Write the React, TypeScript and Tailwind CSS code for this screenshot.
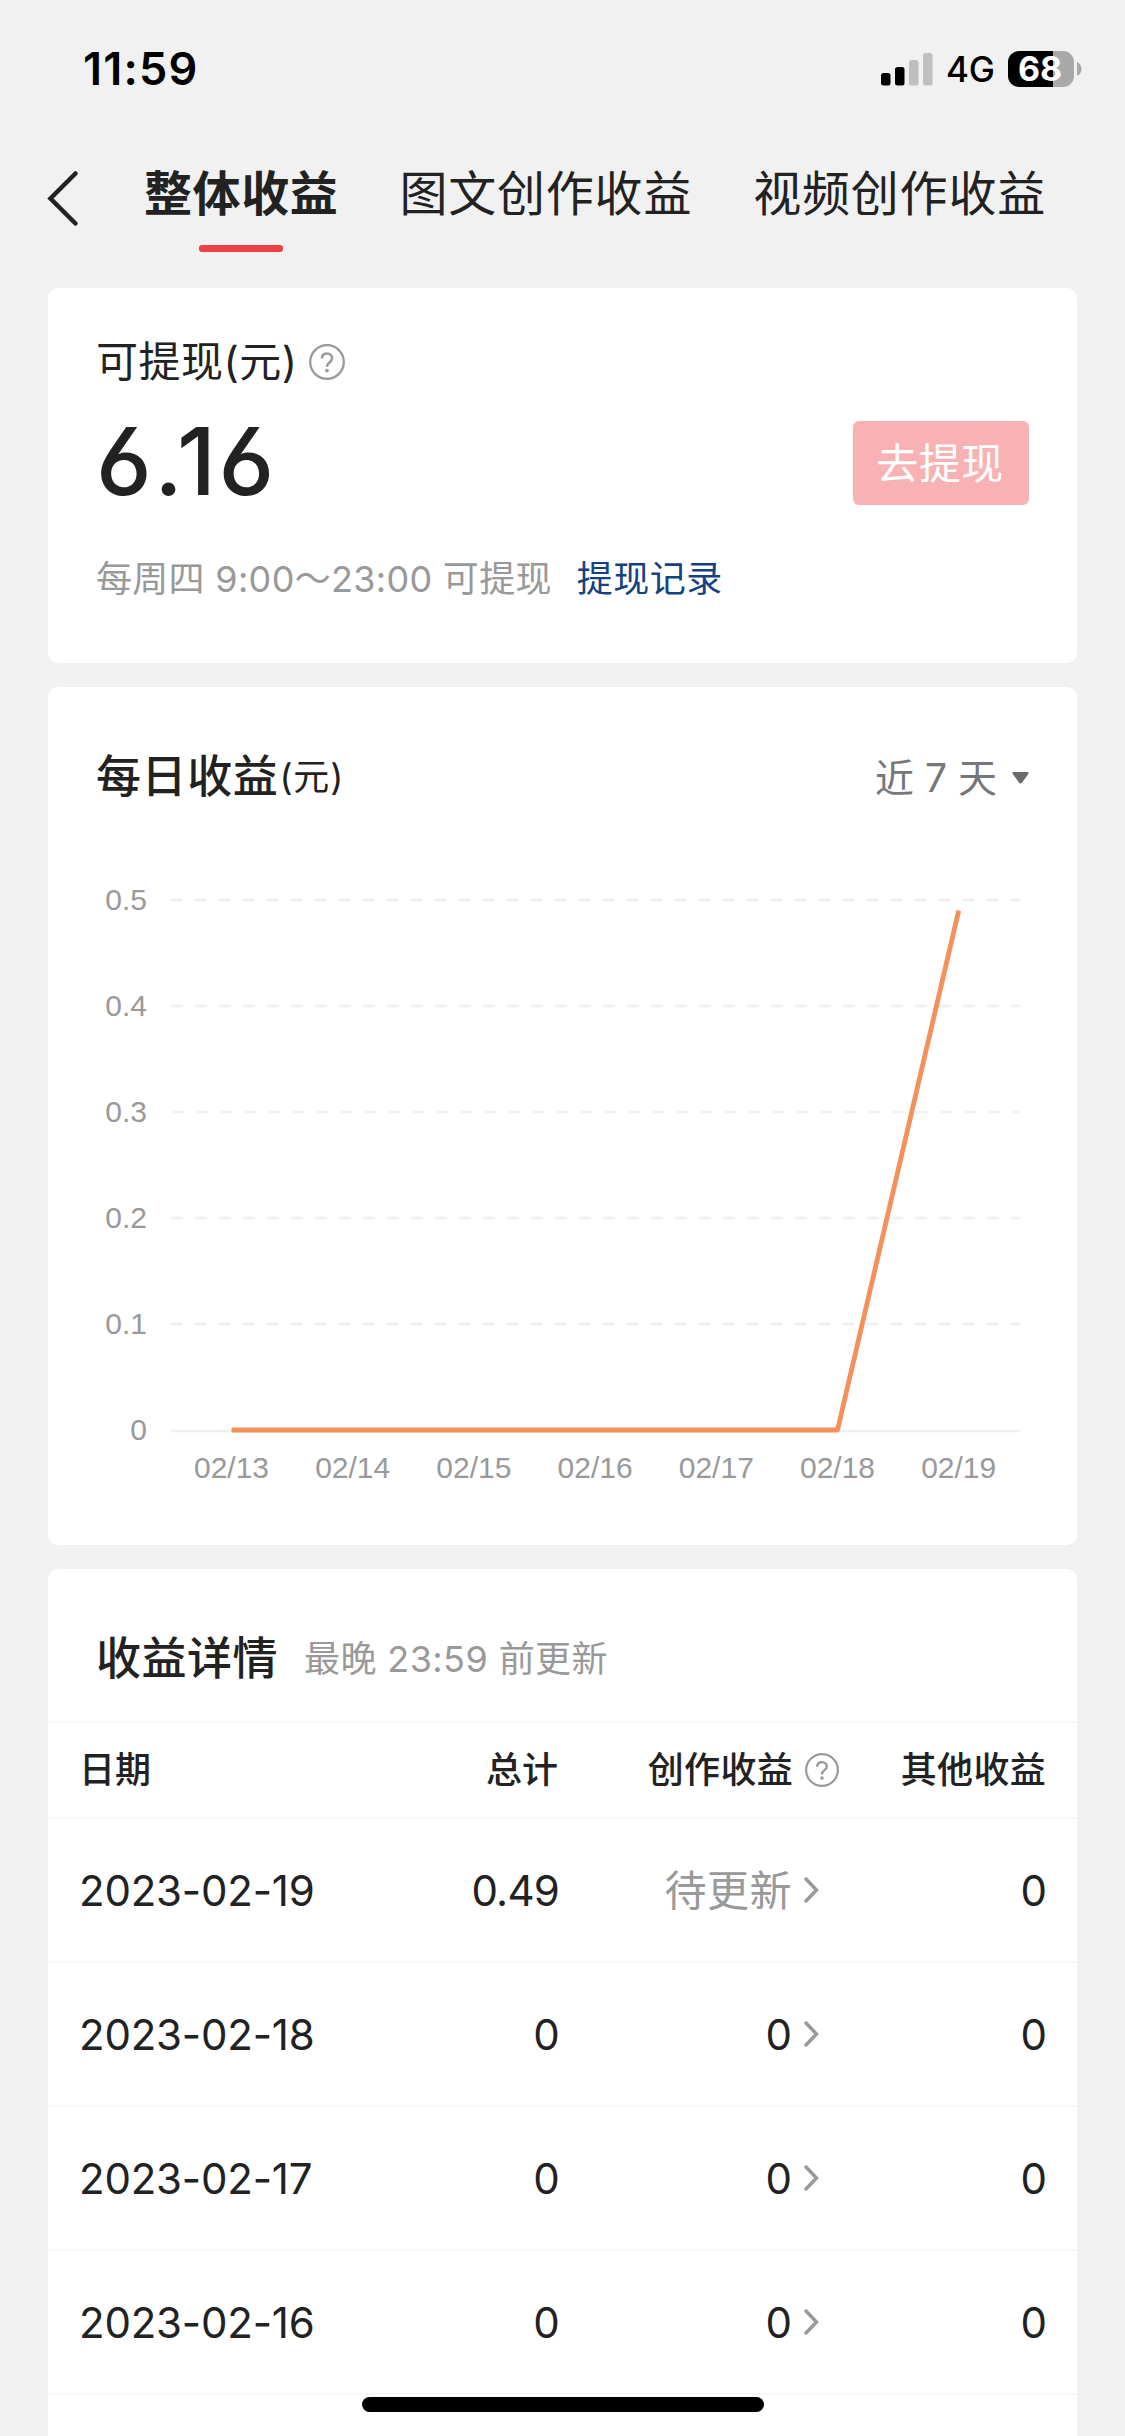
const TABS = ["整体收益", "图文创作收益", "视频创作收益"];

const DAYS = [
    { day: "02/13", value: 0 },
    { day: "02/14", value: 0 },
    { day: "02/15", value: 0 },
    { day: "02/16", value: 0 },
    { day: "02/17", value: 0 },
    { day: "02/18", value: 0 },
    { day: "02/19", value: 0.49 },
];

const TICKS = ["0.5", "0.4", "0.3", "0.2", "0.1", "0"];

const ROWS = [
    { date: "2023-02-19", total: "0.49", creation: null, other: "0" },
    { date: "2023-02-18", total: "0", creation: "0", other: "0" },
    { date: "2023-02-17", total: "0", creation: "0", other: "0" },
    { date: "2023-02-16", total: "0", creation: "0", other: "0" },
];

function HelpIcon({ size }: { size: number }) {
    return (
        <svg width={size} height={size} viewBox="0 0 36 36" fill="none" stroke="#999999" className="shrink-0">
            <circle cx="18" cy="18" r="16.8" strokeWidth="2.3" />
            <path d="M12.9 14.6c0-3.2 2.2-5 5.1-5s5.1 1.9 5.1 4.5c0 2-1 3.1-2.6 4.3-1.7 1.3-2.5 2-2.5 3.8v.6" strokeWidth="2.5" />
            <circle cx="18" cy="26.6" r="1.9" fill="#999999" stroke="none" />
        </svg>
    );
}

function StatusBar() {
    return (
        <div className="flex h-[138px] items-center justify-between pl-[83px] pr-[43px]">
            <span className="text-[45px] leading-[54px] font-semibold text-black tracking-[1.2px]">11:59</span>
            <div className="flex items-center">
                <svg width="52" height="34" viewBox="0 0 52 34">
                    <rect x="0" y="21" width="9.5" height="12.5" rx="2.5" fill="#000" />
                    <rect x="14" y="15" width="9.5" height="18.5" rx="2.5" fill="#000" />
                    <rect x="28" y="8" width="9.5" height="25.5" rx="2.5" fill="#bfbfbf" />
                    <rect x="42" y="1" width="9.5" height="32.5" rx="2.5" fill="#bfbfbf" />
                </svg>
                <span className="ml-[13px] w-[62px] text-[35px] leading-[40px] font-medium text-black tracking-[-0.3px]">4G</span>
                <div className="flex h-9 w-[66px] items-center justify-center rounded-[11px] bg-[linear-gradient(to_right,#000_45px,#a9a9a9_45px)]">
                    <span className="pr-0.5 text-[34px] leading-9 font-bold text-white">68</span>
                </div>
                <svg width="5" height="14" viewBox="0 0 5 14" className="ml-[3px]">
                    <path d="M0 0c3 1.5 4.5 4 4.5 7S3 12.5 0 14z" fill="#a9a9a9" />
                </svg>
            </div>
        </div>
    );
}

function NavTabs() {
    return (
        <nav className="flex h-[150px] items-start pl-[46px] pt-[26px]">
            <svg width="34" height="60" viewBox="0 0 34 60" fill="none" className="mt-1 mr-[64px]">
                <path d="M29.5 5.5 4.5 30.5l25 25" stroke="#222" strokeWidth="4.5" strokeLinecap="round" />
            </svg>
            <div className="flex gap-[61px]">
                {TABS.map((tab, i) => (
                    <div key={tab} className="flex flex-col items-center">
                        <span
                            className={
                                i === 0
                                    ? "text-[48px] leading-[60px] tracking-[0.6px] font-bold whitespace-nowrap"
                                    : "text-[48px] leading-[60px] tracking-[0.8px] whitespace-nowrap"
                            }
                        >
                            {tab}
                        </span>
                        {i === 0 && <span className="mt-[21px] h-[7px] w-[84px] rounded-[3px] bg-[#ee4145]" />}
                    </div>
                ))}
            </div>
        </nav>
    );
}

function Balance() {
    return (
        <section className="flex h-[375px] items-start justify-between rounded-[10px] bg-white px-12">
            <div className="flex flex-col">
                <div className="mt-[46px] flex items-center">
                    <span className="text-[42px] leading-[56px] tracking-[0.5px]">可提现(元)</span>
                    <span className="ml-[11px]">
                        <HelpIcon size={36} />
                    </span>
                </div>
                <span className="mt-[21px] text-[94px] leading-[100px] font-medium tracking-[2.5px] [font-feature-settings:'cv03']">
                    6.16
                </span>
                <div className="mt-[41px] flex text-[36px] leading-[54px]">
                    <span className="text-[#999999] tracking-[0.3px]">每周四 9:00～23:00 可提现</span>
                    <a className="ml-[25px] text-[#134283] tracking-[0.5px]">提现记录</a>
                </div>
            </div>
            <button className="mt-[133px] h-[84px] w-[176px] rounded-md bg-[#f9b2b4] pr-0.5 text-[42px] leading-[86px] text-white tracking-[0.5px]">
                去提现
            </button>
        </section>
    );
}

function DailyChart() {
    const x = (i: number) => 135.5 + i * 121.2;
    const y = (v: number) => 560 - v * 1060;
    return (
        <svg
            width="1029"
            height="675"
            viewBox="0 0 1029 675"
            className="block text-[30px] [font-family:'Liberation_Sans',Arial,sans-serif]"
        >
            <g transform="translate(48 0)">
                {TICKS.map((tick, i) => (
                    <g key={tick}>
                        <text x="51" y={39.5 + i * 106} textAnchor="end" fill="#999999">
                            {tick}
                        </text>
                        <path
                            d={`M75 ${i === 5 ? 561 : 30 + i * 106}H924.5`}
                            stroke="#f0f0f0"
                            strokeWidth="2.5"
                            strokeDasharray={i === 5 ? undefined : "12 12"}
                        />
                    </g>
                ))}
                {DAYS.map(({ day }, i) => (
                    <text key={day} x={x(i)} y="608" textAnchor="middle" fill="#999999">
                        {day}
                    </text>
                ))}
                <polyline
                    points={DAYS.map((d, i) => `${x(i)},${y(d.value)}`).join(" ")}
                    fill="none"
                    stroke="#f4915a"
                    strokeWidth="4.8"
                    strokeLinejoin="round"
                />
            </g>
        </svg>
    );
}

function DailyEarnings() {
    return (
        <section className="mt-6 h-[858px] rounded-[10px] bg-white">
            <div className="flex h-[183px] items-start justify-between px-12 pt-[60px]">
                <h2 className="flex items-center">
                    <span className="text-[45px] leading-[60px] font-medium tracking-[0.6px]">每日收益</span>
                    <span className="ml-px text-[36px] leading-[58px] tracking-[0.8px]">(元)</span>
                </h2>
                <div className="flex items-center text-[39px] leading-[62px] text-[#777777]">
                    近 7 天
                    <svg width="17" height="12" viewBox="0 0 17 12" className="ml-[15px]">
                        <path d="M1.5 0h14c1.2 0 1.5 1.3.7 2.1L10 10.7c-.9 1-2.1 1-3 0L.8 2.1C0 1.3.3 0 1.5 0z" fill="#6b6b6b" />
                    </svg>
                </div>
            </div>
            <DailyChart />
        </section>
    );
}

const COLS = "grid grid-cols-[230px_249px_312px_1fr] items-center border-b-2 border-[#f8f8f8] px-[31px]";

function Details() {
    return (
        <section className="mt-6 rounded-t-[10px] bg-white">
            <div className="flex h-[154px] items-center border-b-2 border-[#f8f8f8] pl-12 pt-7">
                <h2 className="text-[45px] leading-[60px] font-medium tracking-[0.5px]">收益详情</h2>
                <span className="ml-[26px] text-[36px] leading-[60px] text-[#999999] tracking-[0.4px]">最晚 23:59 前更新</span>
            </div>
            <div className={`${COLS} h-24 text-[36px] font-medium`}>
                <span>日期</span>
                <span className="text-right">总计</span>
                <span className="flex items-center justify-end pr-[31px]">
                    <span className="mr-3 tracking-[0.3px]">创作收益</span>
                    <HelpIcon size={34} />
                </span>
                <span className="text-right tracking-[0.3px]">其他收益</span>
            </div>
            {ROWS.map((row) => (
                <div key={row.date} className={`${COLS} h-36 text-[42px]`}>
                    <span className="whitespace-nowrap tracking-[-0.2px]">{row.date}</span>
                    <span className="-mr-px text-right tracking-[-0.8px]">{row.total}</span>
                    <span className="flex items-center justify-end pr-[51px]">
                        {row.creation ?? <span className="text-[#999999] tracking-[0.5px]">待更新</span>}
                        <svg width="16" height="26" viewBox="0 0 16 26" fill="none" className="ml-[11px]">
                            <path d="M3 2l10.5 11L3 24" stroke="#999999" strokeWidth="3.5" strokeLinecap="round" />
                        </svg>
                    </span>
                    <span className="-mr-px text-right">{row.other}</span>
                </div>
            ))}
            <div className="h-12" />
        </section>
    );
}

export default function App() {
    return (
        <div className="relative h-[2436px] w-[1125px] overflow-hidden bg-[#f1f1f1] text-[#222222] [font-family:Inter,'Noto_Sans_CJK_SC',sans-serif]">
            <StatusBar />
            <NavTabs />
            <main className="px-12">
                <Balance />
                <DailyEarnings />
                <Details />
            </main>
            <div className="absolute bottom-6 left-[362px] h-[15px] w-[402px] rounded-full bg-black" />
        </div>
    );
}
